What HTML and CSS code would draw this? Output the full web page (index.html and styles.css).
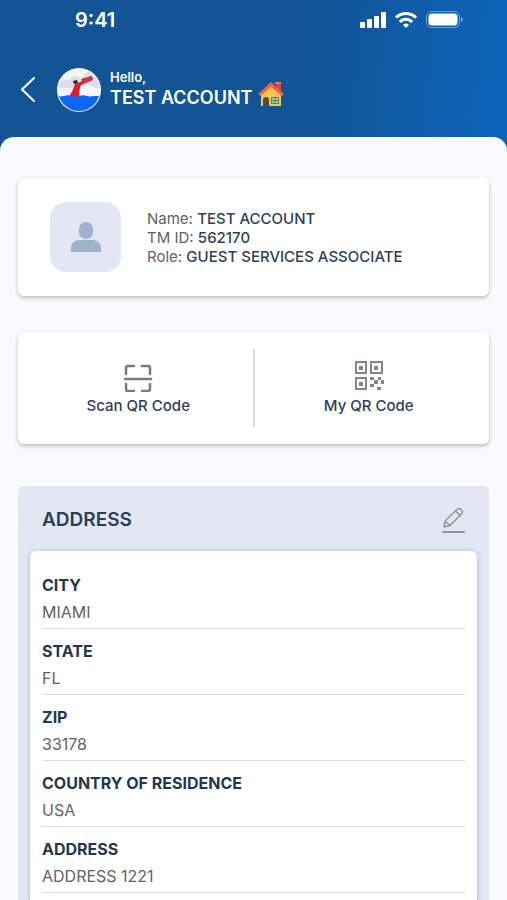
FILE: index.html
```html
<!DOCTYPE html>
<html lang="en">
<head>
    <meta charset="UTF-8">
    <meta name="viewport" content="width=device-width, initial-scale=1.0">
    <title>My Profile</title>
    <link rel="stylesheet" href="styles.css">
</head>
<body>
    <header class="header">
        <div class="status-bar">
            <span class="time">9:41</span>
            <div class="status-icons">
                <svg width="27" height="18" viewBox="0 0 27 18" fill="#fff">
                    <rect x="1" y="11" width="5" height="6" rx="1"/>
                    <rect x="8" y="8" width="5" height="9" rx="1"/>
                    <rect x="15" y="5" width="5" height="12" rx="1"/>
                    <rect x="22" y="1" width="5" height="16" rx="1"/>
                </svg>
                <svg width="24" height="18" viewBox="0 0 24 18" fill="none" stroke="#fff" stroke-width="3">
                    <path d="M2 6.6a14.3 14.3 0 0 1 20 0"/>
                    <path d="M5.8 10.8a8.9 8.9 0 0 1 12.4 0"/>
                    <path d="M12 17l-3-3a4.3 4.3 0 0 1 6 0z" fill="#fff" stroke="none"/>
                </svg>
                <svg width="38" height="18" viewBox="0 0 38 18">
                    <rect x="0.5" y="0.5" width="33" height="16" rx="5" fill="none" stroke="#fff" stroke-opacity=".4"/>
                    <rect x="2.5" y="2.5" width="29" height="12" rx="3.5" fill="#fff"/>
                    <path d="M35 6c2.300 1 2.300 4 0 5z" fill="#fff" fill-opacity=".5"/>
                </svg>
            </div>
        </div>

        <div class="user-bar">
            <button type="button" class="back" aria-label="Back">
                <svg width="16" height="28" viewBox="0 0 16 28" fill="none" stroke="#fff" stroke-width="2" stroke-linecap="round" stroke-linejoin="round">
                    <path d="M14 2L2 13.500L14 25"/>
                </svg>
            </button>
            <svg class="logo" width="44" height="44" viewBox="0 0 44 44">
                <defs>
                    <clipPath id="round"><circle cx="22" cy="22" r="21"/></clipPath>
                </defs>
                <circle cx="22" cy="22" r="22" fill="#fff"/>
                <g clip-path="url(#round)">
                    <rect width="44" height="44" fill="#f3f4f8"/>
                    <path d="M0 17c4-6 8-6 11-4 3-5 9-6 13-2l6-7h14v16H0z" fill="#dcdfe9"/>
                    <path d="M23 29V20l7-6c-4 6-3 10 1 13l-1 3z" fill="#fff"/>
                    <path d="M28 18c3-2 6-1 7 1 3 0 5 2 5 5s-4 5-7 4c-4 0-6-3-5-6z" fill="#f6f6f9"/>
                    <path d="M10 31c4-5 6-9 8-15l3-1 14-7 1 4-12 5c-2 4-2 9-1 14z" fill="#e11b2b"/>
                    <path d="M24 11l10-3 1 4-9 3z" fill="#c23a48"/>
                    <path d="M16 13l4-1 1 3-4 1z" fill="#28202d"/>
                    <path d="M0 28c3 0 3 1 7 0s4-1 7 0 5 1 8 0 5-1 8 0 5 0 7 0 4 0 7 0v16H0z" fill="#0967fa"/>
                </g>
            </svg>
            <div class="greeting">
                <span class="hello">Hello,</span>
                <h1 class="user-name">
                    TEST ACCOUNT
                    <svg class="house" width="26" height="26" viewBox="0 0 26 26" role="img" aria-label="Home">
                        <path d="M18 2h5v9h-4z" fill="#d94c3c"/>
                        <path d="M17 1h6v2h-6z" fill="#f1705b"/>
                        <path d="M3 12L13 3l10 9v13H3z" fill="#f9c64c"/>
                        <path d="M13 1L0 13l2 2 11-9 11 9 2-2z" fill="#ef6248"/>
                        <path d="M5 25v-6a3 3 0 0 1 6 0v6z" fill="#54483f"/>
                        <rect x="13" y="16" width="8" height="7" fill="#6d7d62"/>
                        <path d="M14 17h2.500v2H14zM17.500 17H20v2h-2.500zM14 20h2.500v2H14zM17.500 20H20v2h-2.500z" fill="#76d4e8"/>
                    </svg>
                </h1>
            </div>
        </div>
    </header>

    <main class="content">
        <section class="card profile">
            <div class="avatar">
                <svg width="30" height="30" viewBox="0 0 30 30" fill="#9fb2cb">
                    <rect x="8" y="0" width="14" height="17" rx="7"/>
                    <path d="M0 30v-3c0-6 4-9 9-9h12c5 0 9 3 9 9v3z"/>
                </svg>
            </div>
            <ul class="profile-info">
                <li>Name: <strong>TEST ACCOUNT</strong></li>
                <li>TM ID: <strong>562170</strong></li>
                <li>Role: <strong>GUEST SERVICES ASSOCIATE</strong></li>
            </ul>
        </section>

        <section class="card actions">
            <button type="button" class="action scan">
                <svg width="30" height="32" viewBox="0 0 30 32" fill="none" stroke="#7b7b7b" stroke-width="2.500" stroke-linecap="round">
                    <path d="M3 14V8q0-2 2-2h6M19 6h6q2 0 2 2v6M3 24v5q0 2 2 2h6M19 31h6q2 0 2-2v-5M2 19h26"/>
                </svg>
                Scan QR Code
            </button>
            <button type="button" class="action my-code">
                <svg width="30" height="32" viewBox="0 0 30 32" fill="#85868d">
                    <path d="M1 1h12v13H1zM3 3v9h8V3zM16 1h13v13H16zM18 3v9h9V3zM1 17h12v13H1zM3 19v9h8v-9z" fill-rule="evenodd"/>
                    <path d="M5 6h4v4H5zM20 6h4v4h-4zM5 22h4v4H5z"/>
                    <path d="M16 17h4v3h-4zM24 17h3v3h-3zM20 20h4v4h-4zM27 20h3v4h-3zM16 24h4v3h-4zM23 27h4v3h-4z"/>
                </svg>
                My QR Code
            </button>
        </section>

        <section class="panel">
            <div class="panel-header">
                <h2>ADDRESS</h2>
                <button type="button" class="edit" aria-label="Edit address">
                    <svg width="24" height="26" viewBox="0 0 24 26" fill="none" stroke="#93959e" stroke-width="2" stroke-linejoin="round" stroke-linecap="round">
                        <path d="M3 20l1-6L16 2.500c3-2.500 7 1.500 4.500 4.500L9 18.500zM4 14l5 4.500M14.500 4l5 5" stroke-width="1.500"/>
                        <path d="M2 25h21"/>
                    </svg>
                </button>
            </div>
            <dl class="panel-body">
                <div class="field">
                    <dt>CITY</dt>
                    <dd>MIAMI</dd>
                </div>
                <div class="field">
                    <dt>STATE</dt>
                    <dd>FL</dd>
                </div>
                <div class="field">
                    <dt>ZIP</dt>
                    <dd>33178</dd>
                </div>
                <div class="field">
                    <dt>COUNTRY OF RESIDENCE</dt>
                    <dd>USA</dd>
                </div>
                <div class="field">
                    <dt>ADDRESS</dt>
                    <dd>ADDRESS 1221</dd>
                </div>
            </dl>
        </section>
    </main>
</body>
</html>
```
FILE: styles.css
```css
* {
    box-sizing: border-box;
}

html {
    scrollbar-width: none;
}

body {
    margin: 0;
    font-family: Inter, "Noto Sans", sans-serif;
    font-size: 15px;
    line-height: 20px;
    color: #626264;
    background: linear-gradient(96deg, #125494 50%, #0b6bca 100%);
}

button {
    font: inherit;
    color: inherit;
    background: none;
    border: none;
    padding: 0;
    cursor: pointer;
}

svg {
    display: block;
    flex-shrink: 0;
}

.header {
    color: white;
    padding-bottom: 25px;
}

.status-bar {
    display: flex;
    justify-content: space-between;
    align-items: center;
    padding: 8px 43px 0 75px;
}

.time {
    font-size: 20px;
    font-weight: 600;
    line-height: 24px;
}

.status-icons {
    display: flex;
    align-items: center;
    gap: 8px;
}

.user-bar {
    display: flex;
    align-items: center;
    padding: 36px 20px 0;
}

.logo {
    margin: 0 9px 0 21px;
}

.hello {
    display: block;
    font-size: 13px;
    font-weight: 600;
    line-height: 16px;
}

.user-name {
    display: flex;
    align-items: center;
    gap: 6px;
    margin: 0;
    font-size: 18px;
    font-weight: 600;
    line-height: 26px;
}

.house {
    margin-top: -8px;
}

.content {
    display: flex;
    flex-direction: column;
    padding: 41px 18px 24px;
    background: #fafafd;
    border-radius: 14px 14px 0 0;
}

.card {
    display: flex;
    background: white;
    border-radius: 6px;
    box-shadow: 0 2px 4px rgba(0, 0, 0, 0.25);
}

.profile {
    align-items: center;
    gap: 26px;
    padding: 24px 32px;
    margin-bottom: 36px;
}

.avatar {
    display: flex;
    align-items: center;
    justify-content: center;
    flex-shrink: 0;
    width: 71px;
    height: 70px;
    border-radius: 16px;
    background: #e3e7f4;
}

.profile-info {
    list-style: none;
    margin: 0;
    padding: 0;
    line-height: 19px;
}

.profile-info strong {
    font-weight: 500;
    color: #2e3f56;
}

.actions {
    padding: 17px 0;
    margin-bottom: 42px;
}

.action {
    flex: 1;
    display: flex;
    flex-direction: column;
    align-items: center;
    gap: 4px;
    padding: 11px 0;
    font-weight: 500;
    color: #2e3f56;
}

.scan {
    padding-left: 6px;
}

.my-code {
    padding-right: 6px;
    border-left: 2px solid #dcdcde;
}

.panel {
    padding: 0 12px 12px;
    background: #e3e7f4;
    border-radius: 6px;
}

.panel-header {
    display: flex;
    align-items: center;
    justify-content: space-between;
    padding: 21px 12px 18px;
}

.panel-header h2 {
    margin: 0;
    font-size: 19px;
    font-weight: 600;
    line-height: 26px;
    color: #2b3f56;
}

.panel-body {
    margin: 0;
    padding: 12px;
    background: white;
    border-radius: 6px;
    box-shadow: 0 1px 5px rgba(40, 50, 100, 0.3);
}

.field {
    padding: 12px 0 6px;
    border-bottom: 1px solid #dddde0;
}

.field dt {
    margin-bottom: 7px;
    font-size: 16px;
    font-weight: 700;
    color: #21384f;
}

.field dd {
    margin: 0;
    font-size: 16px;
}
```
